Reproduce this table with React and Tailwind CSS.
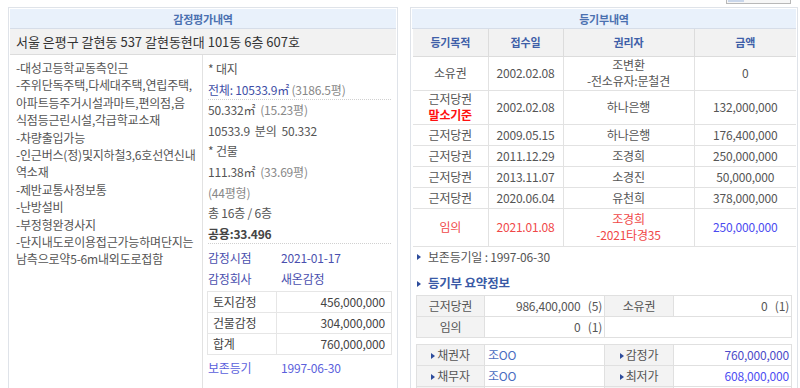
import React from 'react';

const leftNotes = [
  ['-대성고등학교동측인근'],
  ['-주위단독주택,다세대주택,연립주택,', '아파트등주거시설과마트,편의점,음', '식점등근린시설,각급학교소재'],
  ['-차량출입가능'],
  ['-인근버스(정)및지하철3,6호선연신내', '역소재'],
  ['-제반교통사정보통'],
  ['-난방설비'],
  ['-부정형완경사지'],
  ['-단지내도로이용접근가능하며단지는', '남측으로약5-6m내외도로접함'],
];

const registry = [
  { kind: ['소유권'], date: '2002.02.08', who: ['조변환', '-전소유자:문철견'], amt: '0', h: 'h-[34px]' },
  { kind: ['근저당권'], base: true, date: '2002.02.08', who: ['하나은행'], amt: '132,000,000', h: 'h-[34px]' },
  { kind: ['근저당권'], date: '2009.05.15', who: ['하나은행'], amt: '176,400,000', h: 'h-[21px]' },
  { kind: ['근저당권'], date: '2011.12.29', who: ['조경희'], amt: '250,000,000', h: 'h-[21px]' },
  { kind: ['근저당권'], date: '2013.11.07', who: ['소경진'], amt: '50,000,000', h: 'h-[21px]' },
  { kind: ['근저당권'], date: '2020.06.04', who: ['유천희'], amt: '378,000,000', h: 'h-[21px]' },
  { kind: ['임의'], red: true, date: '2021.01.08', who: ['조경희', '-2021타경35'], amt: '250,000,000', h: 'h-[38px]' },
];

function Arrow() {
  return <span className="inline-block w-0 h-0 border-y-[3px] border-y-transparent border-l-[4px] border-l-[#2d4c9c] mr-[2px] align-middle" />;
}

function PanelHead({ children }) {
  return (
    <div className="h-[20px] bg-[#e9f1fb] border-b border-[#d6dde8] text-center text-[11px] font-bold leading-[20px] text-[#4a70b0]">
      {children}
    </div>
  );
}

export default function App() {
  return (
    <div className="w-[800px] h-[388px] overflow-hidden bg-white font-['Noto_Sans_CJK_KR',sans-serif] text-[12px] tracking-[-0.2px] text-[#555]">
      {/* 상단 버튼 (잘림) */}
      <div className="h-[7px] flex justify-end pr-[9px]">
        <div className="w-[65px] h-[4px] border border-t-0 border-[#b8b8b8] bg-[#f6f6f6] flex items-start px-[1px]">
          <div className="w-[16px] h-[2px] bg-[#c9d6ea]" />
        </div>
      </div>

      <div className="flex gap-[12px] pl-[8px]">
        {/* 감정평가내역 */}
        <div className="w-[390px] h-[420px] border border-[#dfe3e9] p-px">
          <PanelHead>감정평가내역</PanelHead>
          <div className="h-[26px] bg-[#f2f2f2] border-b border-[#dcdcdc] px-[6px] text-[13px] tracking-normal leading-[26px] text-[#333]">
            서울 은평구 갈현동 537 갈현동현대 101동 6층 607호
          </div>
          <div className="flex h-[400px]">
            <div className="w-[193px] border-r border-[#e2e2e2] pl-[6px] pt-[4px] leading-[17.4px] whitespace-nowrap">
              {leftNotes.map((lines, i) => (
                <div key={i}>
                  {lines.map((l, j) => (
                    <div key={j}>{l}</div>
                  ))}
                </div>
              ))}
            </div>
            <div className="flex-1 px-[4px] pt-[4px] whitespace-nowrap">
              <div className="leading-[20.6px] px-px">
                <div className="h-[20.6px]">* 대지</div>
                <div className="h-[20.6px] border-b border-dotted border-[#d0d0d0]">
                  <span className="text-[#3e4ea6]">전체: 10533.9㎡</span> <span className="text-[#888]">(3186.5평)</span>
                </div>
                <div className="h-[20.6px]">50.332㎡ <span className="text-[#888]">&nbsp;(15.23평)</span></div>
                <div className="h-[20.6px]">10533.9 &nbsp;분의 &nbsp;50.332</div>
                <div className="h-[20.6px]">* 건물</div>
                <div className="h-[20.6px]">111.38㎡ <span className="text-[#888]">&nbsp;(33.69평)</span></div>
                <div className="h-[20.6px] text-[#888]">(44평형)</div>
                <div className="h-[20.6px]">총 16층 / 6층</div>
                <div className="h-[20.6px] border-b border-dotted border-[#d0d0d0] font-bold text-[#444]">공용:33.496</div>
              </div>
              <div className="pt-[3px] px-px leading-[21px] text-[#4a4fae]">
                <div className="flex"><span className="w-[73px]">감정시점</span><span>2021-01-17</span></div>
                <div className="flex"><span className="w-[73px]">감정회사</span><span>새온감정</span></div>
              </div>
              <table className="mt-[2px] w-full border-collapse border border-[#e6e6e6] text-[#444]">
                <tbody>
                  {[['토지감정', '456,000,000'], ['건물감정', '304,000,000'], ['합계', '760,000,000']].map(([k, v]) => (
                    <tr key={k} className="h-[21px]">
                      <td className="w-[69px] border border-[#e6e6e6] pl-[5px]">{k}</td>
                      <td className="border border-[#e6e6e6] pr-[6px] text-right">{v}</td>
                    </tr>
                  ))}
                </tbody>
              </table>
              <div className="mt-[2px] flex px-px leading-[21px] text-[#5a60dc]">
                <span className="w-[73px]">보존등기</span><span>1997-06-30</span>
              </div>
            </div>
          </div>
        </div>

        {/* 등기부내역 */}
        <div className="w-[388px] h-[420px] border border-[#dfe3e9] p-px">
          <PanelHead>등기부내역</PanelHead>
          <table className="w-[383px] ml-px border-collapse text-center">
            <thead>
              <tr className="h-[27px] bg-[#f2f2f2] text-[11px] font-bold text-[#3f5fa8]">
                <th className="w-[75px] border-r border-b border-[#dcdcdc] font-bold">등기목적</th>
                <th className="w-[75px] border-x border-b border-[#dcdcdc] font-bold">접수일</th>
                <th className="w-[131px] border-x border-b border-[#dcdcdc] font-bold">권리자</th>
                <th className="border-l border-b border-[#dcdcdc] font-bold">금액</th>
              </tr>
            </thead>
            <tbody className="leading-[16px]">
              {registry.map((r, i) => (
                <tr key={i} className={`${r.h} ${r.red ? 'text-[#f04848]' : ''}`}>
                  <td className="border-r border-b border-[#e2e2e2]">
                    {r.kind.map((k) => <div key={k}>{k}</div>)}
                    {r.base && <div className="font-bold text-[#ff1010]">말소기준</div>}
                  </td>
                  <td className="border-x border-b border-[#e2e2e2]">{r.date}</td>
                  <td className="border-x border-b border-[#e2e2e2]">
                    {r.who.map((w) => <div key={w}>{w}</div>)}
                  </td>
                  <td className={`border-l border-b border-[#e2e2e2] ${r.red ? 'text-[#4b4bf0]' : ''}`}>{r.amt}</td>
                </tr>
              ))}
            </tbody>
          </table>

          <div className="px-[4px]">
            <div className="h-[20px] flex items-center pl-[1px]">
              <Arrow />
              <span className="ml-[5px]">보존등기일 : 1997-06-30</span>
            </div>
            <div className="h-[18px] mt-[8px] flex items-center pl-[1px]">
              <Arrow />
              <span className="ml-[5px] text-[12.5px] font-bold text-[#3a5aa6]">등기부 요약정보</span>
            </div>
            <table className="mt-[2px] w-full border-collapse border border-[#e0e0e0]">
              <tbody>
                <tr className="h-[21px]">
                  <td className="w-[68px] bg-[#f3f3f3] border border-[#e0e0e0] text-center">근저당권</td>
                  <td className="w-[120px] border border-[#e0e0e0] text-right pr-[2px]">986,400,000 &nbsp;&nbsp;(5)</td>
                  <td className="w-[69px] bg-[#f3f3f3] border border-[#e0e0e0] text-center">소유권</td>
                  <td className="border border-[#e0e0e0] text-right pr-[2px]">0 &nbsp;&nbsp;(1)</td>
                </tr>
                <tr className="h-[21px]">
                  <td className="bg-[#f3f3f3] border border-[#e0e0e0] text-center">임의</td>
                  <td className="border border-[#e0e0e0] text-right pr-[2px]">0 &nbsp;&nbsp;(1)</td>
                  <td colSpan={2} className="border border-[#e0e0e0]" />
                </tr>
              </tbody>
            </table>
            <table className="mt-[6px] w-full border-collapse border border-[#e0e0e0]">
              <tbody>
                {[
                  ['채권자', '조OO', '감정가', '760,000,000', 'text-[#4b4bc8]'],
                  ['채무자', '조OO', '최저가', '608,000,000', 'text-[#4d4df2]'],
                ].map(([a, b, c, d, col]) => (
                  <tr key={a} className="h-[21px]">
                    <td className="w-[68px] bg-[#f3f3f3] border border-[#e0e0e0] text-center"><Arrow />{a}</td>
                    <td className="w-[120px] border border-[#e0e0e0] pl-[3px] text-[#4a6cc0]">{b}</td>
                    <td className="w-[69px] bg-[#f3f3f3] border border-[#e0e0e0] text-center"><Arrow />{c}</td>
                    <td className={`border border-[#e0e0e0] text-right pr-[2px] ${col}`}>{d}</td>
                  </tr>
                ))}
                <tr className="h-[21px]">
                  <td className="bg-[#f3f3f3] border border-[#e0e0e0]" />
                  <td className="border border-[#e0e0e0]" />
                  <td className="bg-[#f3f3f3] border border-[#e0e0e0]" />
                  <td className="border border-[#e0e0e0]" />
                </tr>
              </tbody>
            </table>
          </div>
        </div>
      </div>
    </div>
  );
}
